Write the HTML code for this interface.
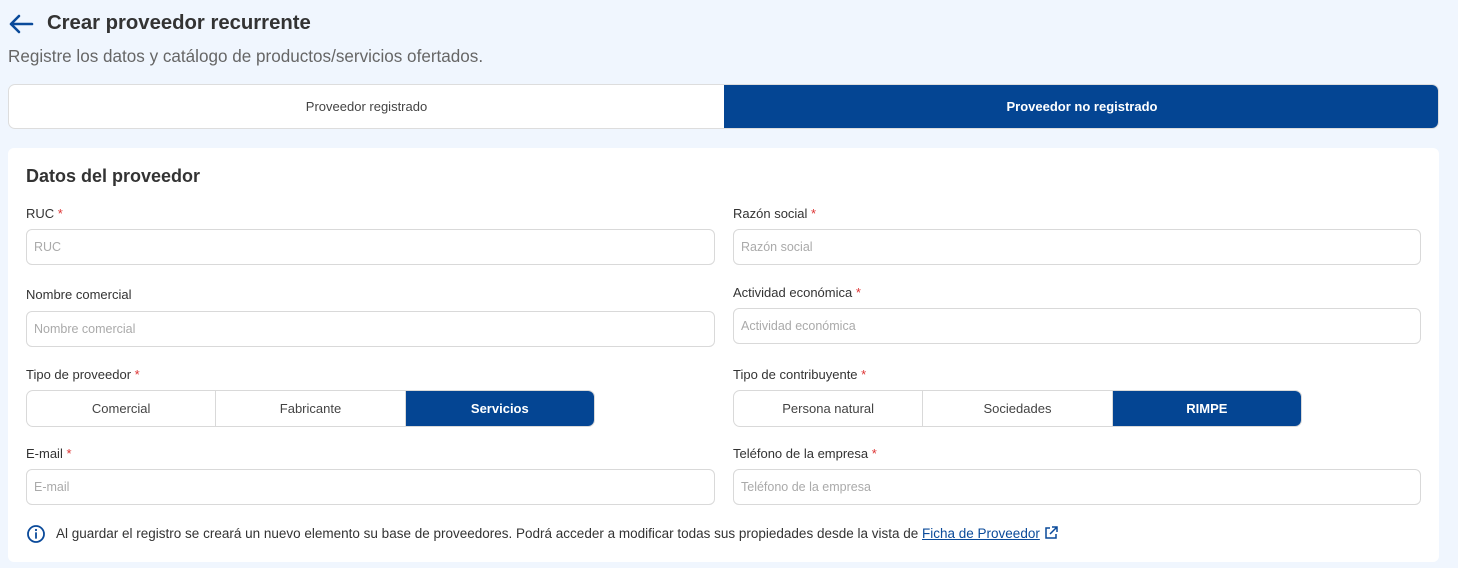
<!DOCTYPE html><html><head><meta charset="utf-8"><style>
*{box-sizing:border-box;margin:0;padding:0}
body{width:1458px;height:568px;background:#f0f6fe;font-family:"Liberation Sans",sans-serif;position:relative;overflow:hidden;color:#333}
.a{position:absolute}
.lbl{position:absolute;font-size:13px;color:#333}
.lbl i{color:#d33;font-style:normal}
.in{position:absolute;height:36px;border:1px solid #d9d9d9;border-radius:6px;background:#fff;font-size:12.5px;color:#aaa;padding-left:7px;line-height:34px}
.seg{position:absolute;height:37px;display:flex;border:1px solid #d9d9d9;border-radius:7px;overflow:hidden;background:#fff}
.seg div{flex:1;text-align:center;line-height:35px;font-size:13px;color:#444;border-right:1px solid #d9d9d9}
.seg div.on{background:#044593;color:#fff;font-weight:bold;border:none}
</style></head><body>
<svg class="a" style="left:8px;top:14px" width="26" height="20" viewBox="0 0 26 20"><path d="M24 10H3M11 2L3 10l8 8" stroke="#0a4a9a" stroke-width="2.6" fill="none" stroke-linecap="round" stroke-linejoin="round"/></svg>
<div class="a" style="left:47px;top:12px;font-size:20.3px;font-weight:bold;color:#333">Crear proveedor recurrente</div>
<div class="a" style="left:8px;top:47px;font-size:17.1px;color:#666">Registre los datos y catálogo de productos/servicios ofertados.</div>
<div class="a" style="left:8px;top:84px;width:1431px;height:45px;border:1px solid #ddd;border-radius:7px;background:#fff;overflow:hidden">
<div class="a" style="left:0;top:0;width:715px;height:45px;text-align:center;line-height:43px;font-size:13px;color:#444">Proveedor registrado</div>
<div class="a" style="left:715px;top:-1px;width:716px;height:45px;background:#044593;color:#fff;text-align:center;line-height:45px;font-size:13px;font-weight:bold">Proveedor no registrado</div></div>
<div class="a" style="left:8px;top:148px;width:1431px;height:414px;background:#fff;border-radius:6px"></div>
<div class="a" style="left:26px;top:166px;font-size:18px;font-weight:bold;color:#333">Datos del proveedor</div>
<div class="lbl" style="left:26px;top:206px">RUC <i>*</i></div>
<div class="in" style="left:26px;top:229px;width:689px">RUC</div>
<div class="lbl" style="left:733px;top:206px">Razón social <i>*</i></div>
<div class="in" style="left:733px;top:229px;width:688px">Razón social</div>
<div class="lbl" style="left:26px;top:287px">Nombre comercial</div>
<div class="in" style="left:26px;top:311px;width:689px">Nombre comercial</div>
<div class="lbl" style="left:733px;top:285px">Actividad económica <i>*</i></div>
<div class="in" style="left:733px;top:308px;width:688px">Actividad económica</div>
<div class="lbl" style="left:26px;top:367px">Tipo de proveedor <i>*</i></div>
<div class="seg" style="left:26px;top:390px;width:569px"><div>Comercial</div><div>Fabricante</div><div class="on">Servicios</div></div>
<div class="lbl" style="left:733px;top:367px">Tipo de contribuyente <i>*</i></div>
<div class="seg" style="left:733px;top:390px;width:569px"><div>Persona natural</div><div>Sociedades</div><div class="on">RIMPE</div></div>
<div class="lbl" style="left:26px;top:446px">E-mail <i>*</i></div>
<div class="in" style="left:26px;top:469px;width:689px">E-mail</div>
<div class="lbl" style="left:733px;top:446px">Teléfono de la empresa <i>*</i></div>
<div class="in" style="left:733px;top:469px;width:688px">Teléfono de la empresa</div>
<svg class="a" style="left:26px;top:524px" width="20" height="20" viewBox="0 0 20 20"><circle cx="10" cy="10" r="8" stroke="#0a4a9a" stroke-width="1.8" fill="none"/><path d="M10 9v5" stroke="#0a4a9a" stroke-width="1.8" stroke-linecap="round"/><circle cx="10" cy="6" r="1.1" fill="#0a4a9a"/></svg>
<div class="a" style="left:56px;top:526px;font-size:13.5px;color:#333;white-space:nowrap">Al guardar el registro se creará un nuevo elemento su base de proveedores. Podrá acceder a modificar todas sus propiedades desde la vista de <span style="color:#0a4a9a;text-decoration:underline">Ficha de Proveedor</span> <svg style="vertical-align:-2px" width="14" height="14" viewBox="0 0 14 14"><path d="M6 2H2v10h10V8M8 1h5v5M13 1L6 8" stroke="#0a4a9a" stroke-width="1.5" fill="none"/></svg></div>
</body></html>
